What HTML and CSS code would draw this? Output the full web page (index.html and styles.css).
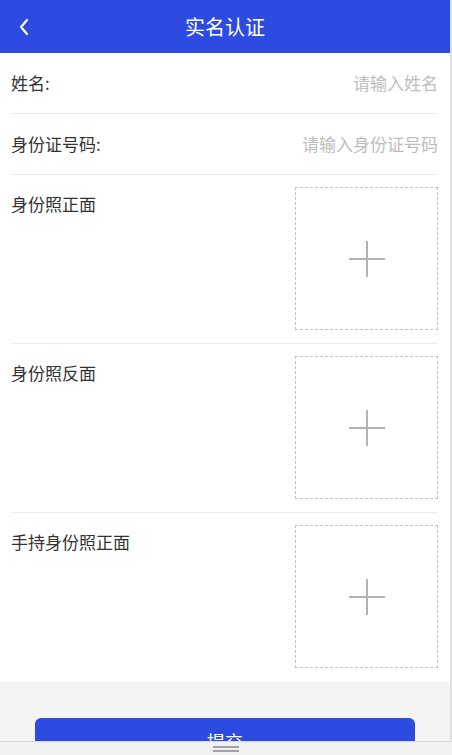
FILE: index.html
```html
<!DOCTYPE html>
<html lang="zh">
<head>
<meta charset="utf-8">
<link rel="stylesheet" href="styles.css">
</head>
<body>
<div class="app">
  <header class="topbar">
    <span class="back"><svg width="12" height="18" viewBox="0 0 12 18"><path d="M9 2 L3 9 L9 16" fill="none" stroke="#fff" stroke-width="2.2" stroke-linecap="round" stroke-linejoin="round"/></svg></span>
    <h1 class="title">实名认证</h1>
  </header>
  <main class="form">
    <div class="row text-row">
      <span class="label">姓名:</span>
      <span class="placeholder">请输入姓名</span>
    </div>
    <div class="row text-row">
      <span class="label">身份证号码:</span>
      <span class="placeholder">请输入身份证号码</span>
    </div>
    <div class="row img-row">
      <span class="label">身份照正面</span>
      <div class="upload"><span class="plus"></span></div>
    </div>
    <div class="row img-row">
      <span class="label">身份照反面</span>
      <div class="upload"><span class="plus"></span></div>
    </div>
    <div class="row img-row last">
      <span class="label">手持身份照正面</span>
      <div class="upload"><span class="plus"></span></div>
    </div>
  </main>
  <div class="actions">
    <button class="submit">提交</button>
  </div>
</div>
<div class="handle"><span></span><span></span></div>
</body>
</html>
```
FILE: styles.css
```css
html, body {
  margin: 0;
  padding: 0;
  height: 100%;
  background: #e4e4e4;
  font-family: "Noto Sans CJK SC", "Noto Sans", sans-serif;
  overflow: hidden;
}
.app {
  width: 450px;
  min-height: 755px;
  background: #f4f4f4;
  border-right: 1px solid #dcdcdc;
}
.topbar {
  height: 53px;
  background: #2d4be1;
  display: flex;
  align-items: center;
  justify-content: center;
  position: relative;
}
.back {
  position: absolute;
  left: 18px;
  top: 18px;
  display: flex;
}
.title {
  margin: 0;
  color: #fff;
  font-size: 20px;
  font-weight: 400;
  line-height: 52px;
}
.form {
  background: #fff;
  padding: 0 12px 0 11px;
}
.row {
  border-bottom: 1px solid #ececec;
  display: flex;
  justify-content: space-between;
  box-sizing: border-box;
}
.row.last { border-bottom: none; height: 169px; }
.text-row {
  height: 61px;
  align-items: center;
}
.label {
  font-size: 17px;
  color: #333;
  line-height: 22px;
}
.placeholder {
  font-size: 17px;
  color: #bdbdbd;
  line-height: 22px;
}
.img-row {
  height: 169px;
  padding-top: 12px;
}
.img-row .label {
  padding-top: 6px;
}
.upload {
  width: 141px;
  height: 141px;
  border: 1px dashed #c4c4c4;
  display: flex;
  align-items: center;
  justify-content: center;
}
.plus {
  width: 36px;
  height: 36px;
  position: relative;
}
.plus::before, .plus::after {
  content: "";
  position: absolute;
  background: #b2b2b2;
}
.plus::before {
  left: 0;
  right: 0;
  top: 17px;
  height: 2px;
}
.plus::after {
  top: 0;
  bottom: 0;
  left: 17px;
  width: 2px;
}
.actions {
  padding: 36px 36px 0 35px;
}
.submit {
  width: 380px;
  height: 46px;
  border: none;
  border-radius: 6px;
  background: #2d4be1;
  color: #fff;
  font-family: inherit;
  font-size: 18px;
  display: block;
}
.handle {
  position: fixed;
  left: 0;
  right: 0;
  bottom: 0;
  height: 13px;
  background: #f1f1f1;
  border-top: 1px solid #d8d8d8;
  display: flex;
  flex-direction: column;
  align-items: center;
  justify-content: center;
  gap: 2px;
}
.handle span {
  width: 26px;
  height: 2px;
  background: #a3a3a3;
}
```
